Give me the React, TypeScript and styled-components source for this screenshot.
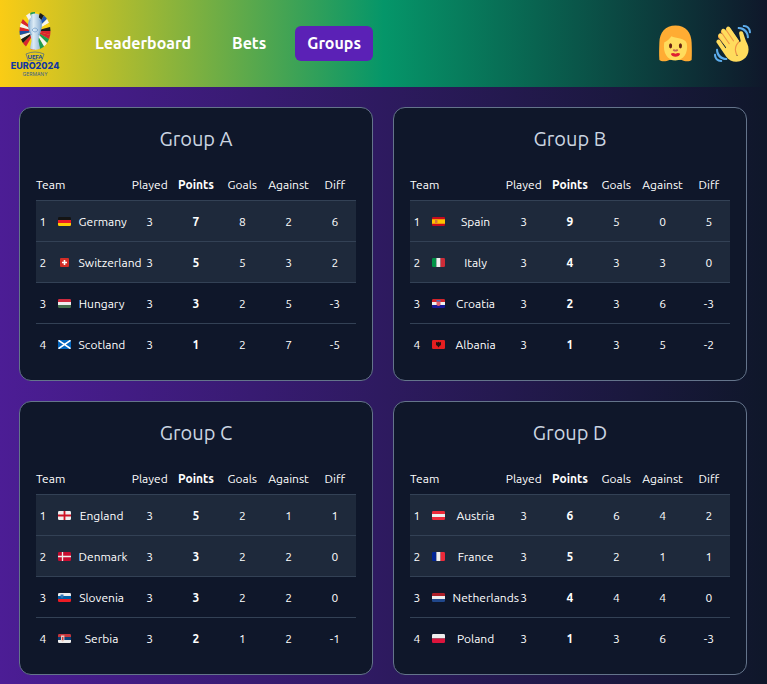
import React from 'react';
import styled, { createGlobalStyle } from 'styled-components';

const GlobalStyle = createGlobalStyle`
  *, *::before, *::after { box-sizing: border-box; }
  body {
    margin: 0;
    min-height: 100vh;
    background: linear-gradient(to right, #4c1d95, #0f172a);
    color: #ffffff;
    font-family: Ubuntu, "Noto Sans", "Open Sans", sans-serif;
    font-size: 16px;
  }
`;

const Header = styled.header`
  display: flex;
  align-items: center;
  justify-content: space-between;
  gap: 16px;
  padding: 10px 16px 10px 10px;
  background: linear-gradient(to right, #facc15, #059669, #0f172a);
`;

const Start = styled.div`
  display: flex;
  align-items: center;
  gap: 23px;
`;

const HomeLink = styled.a`
  display: block;
  height: 67px;
`;

const Nav = styled.nav`
  display: flex;
  gap: 17px;
`;

const NavLink = styled.a<{ $active?: boolean }>`
  padding: 6px 12px;
  border-radius: 6px;
  background: ${(p) => (p.$active ? '#5b21b6' : 'transparent')};
  color: #ffffff;
  font-weight: 700;
  line-height: 23px;
  text-decoration: none;
`;

const Actions = styled.div`
  display: flex;
  gap: 20px;
`;

const IconButton = styled.button`
  display: block;
  padding: 0;
  border: 0;
  background: none;
  cursor: pointer;
  svg { display: block; }
`;

const Groups = styled.main`
  display: grid;
  grid-template-columns: repeat(auto-fit, minmax(340px, 1fr));
  gap: 20px;
  padding: 20px 20px 20px 19px;
`;

const Card = styled.section`
  padding: 16px;
  border: 1px solid #64748b;
  border-radius: 12px;
  background: #0f172a;
`;

const Title = styled.h2`
  margin: 0;
  padding: 1px 0 15px;
  color: #cbd5e1;
  font-size: 20px;
  font-weight: 400;
  line-height: 28px;
  text-align: center;
`;

const Table = styled.table`
  display: block;
  font-size: 12px;
  line-height: 16px;
  thead, tbody { display: block; }
`;

const Row = styled.tr<{ $qualified?: boolean }>`
  display: grid;
  grid-template-columns: repeat(7, minmax(0, 1fr));
  column-gap: 4px;
  background: ${(p) => (p.$qualified ? '#1e293b' : 'transparent')};
  tbody & { border-top: 1px solid #334155; }
`;

const HeadCell = styled.th<{ $strong?: boolean; $team?: boolean }>`
  grid-column: span ${(p) => (p.$team ? 2 : 1)};
  padding: 9px 0 7px;
  font-weight: ${(p) => (p.$strong ? 700 : 400)};
  text-align: ${(p) => (p.$team ? 'left' : 'center')};
`;

const Cell = styled.td<{ $strong?: boolean }>`
  padding: 13px 0 11px;
  font-weight: ${(p) => (p.$strong ? 700 : 400)};
  text-align: center;
`;

const TeamCell = styled.th`
  grid-column: span 2;
  display: grid;
  grid-template-columns: 14px minmax(0, 1fr) 46px;
  align-items: center;
  padding: 13px 0 11px;
  font-weight: 400;
  text-align: center;
  white-space: nowrap;
  svg { display: block; margin: 0 auto 1px; }
`;

const rayColors = [
  '#f7d117', '#1c1c1c', '#1f57b5', '#f4f4f0', '#f7d117', '#1c1c1c', '#d9252f', '#d9252f',
  '#1d9a52', '#f4f4f0', '#1d9a52', '#f7d117', '#d9252f', '#f7d117', '#d9252f', '#1c1c1c',
  '#f4f4f0', '#1f4fa0', '#d9252f', '#f4f4f0', '#d9252f', '#f7d117', '#f4f4f0', '#1d9a52',
];

function Logo() {
  const step = (Math.PI * 2) / rayColors.length;
  return (
    <svg width="50" height="67" viewBox="0 0 50 67" role="img" aria-label="UEFA Euro 2024 Germany">
      <defs>
        <clipPath id="oval"><ellipse cx="25" cy="21" rx="15.5" ry="19" /></clipPath>
        <linearGradient id="silver" x1="0" x2="1">
          <stop offset="0" stopColor="#8fb4d6" />
          <stop offset="0.4" stopColor="#dcebf5" />
          <stop offset="1" stopColor="#86abd0" />
        </linearGradient>
      </defs>
      <g clipPath="url(#oval)">
        {rayColors.map((color, i) => {
          const a = i * step - Math.PI / 2;
          const b = a + step;
          return (
            <path
              key={i}
              fill={color}
              d={`M25 21L${25 + 30 * Math.cos(a)} ${21 + 30 * Math.sin(a)}L${25 + 30 * Math.cos(b)} ${21 + 30 * Math.sin(b)}Z`}
            />
          );
        })}
      </g>
      <path
        d="M21 4.500Q25 2.500 29 4.500L28.800 7.500C32 9 32.500 14 31.300 19C30 24 28.500 27 28.500 31L30 38.500Q25 41 20 38.500L21.500 31C21.500 27 20 24 18.700 19C17.500 14 18 9 21.200 7.500Z"
        fill="url(#silver)"
      />
      <path d="M20 10Q17 17 21.5 25M30 10Q33 17 28.5 25M22 20Q25 16 28 20Q25 24 22 20" fill="none" stroke="#6b9bca" strokeWidth="0.7" />
      <path d="M16 44Q25 40 34 44L31.5 51Q25 48.500 18.5 51Z" fill="none" stroke="#2a55a0" strokeWidth="0.6" />
      <text x="25" y="48.5" textAnchor="middle" fontFamily="Lato, sans-serif" fontWeight="900" fontSize="6" fill="#17459a">UEFA</text>
      <text x="25" y="59" textAnchor="middle" fontFamily="Inter, sans-serif" fontWeight="800" fontSize="9" fill="#1238a0">EURO2024</text>
      <text x="25" y="66" textAnchor="middle" fontFamily="Inter, sans-serif" fontSize="5" fill="#40618b">GERMANY</text>
    </svg>
  );
}

function WomanIcon() {
  return (
    <svg width="37" height="37" viewBox="0 0 36 36" aria-hidden="true">
      <path fill="#FFAC33" d="M18 .5C8 .5 2.500 7.500 2.300 17C2.100 23 1.900 28 2.300 34C4 35.600 9 35.600 12 34H24C27 35.600 32 35.600 33.700 34C34.100 28 33.900 23 33.700 17C33.500 7.500 28 .5 18 .5Z" />
      <path fill="#FFDC5D" d="M7 17C10 15.500 12.500 13.500 14 11C18 13 27.500 12.500 29 18C30.500 27 26 34.500 18 34.500C10 34.500 5.500 27 7 17Z" />
      <ellipse cx="13.200" cy="20.300" rx="1.500" ry="2.500" fill="#662113" />
      <ellipse cx="22.800" cy="20.300" rx="1.500" ry="2.500" fill="#662113" />
      <path d="M16.300 24.500Q18 25.300 19.700 24.500" fill="none" stroke="#C1694F" strokeWidth="1.800" strokeLinecap="round" />
      <path fill="#DF1F32" d="M13.500 28Q15.500 26.700 18 28Q20.500 26.700 22.500 28C22 31.700 14 31.700 13.500 28Z" />
    </svg>
  );
}

function WaveIcon() {
  return (
    <svg width="37" height="37" viewBox="0 0 36 36" aria-hidden="true">
      <path fill="#EF9645" d="M4.861 9.147c.94-.657 2.357-.531 3.201.166l-.968-1.407c-.779-1.111-.5-2.313.612-3.093 1.112-.777 4.263 1.312 4.263 1.312-.786-1.122-.639-2.544.483-3.331 1.122-.784 2.680-.513 3.465.611l10.292 14.719L25 31l-9.224-5.276L4.343 12.611c-.786-1.122-.604-2.680.518-3.464z" />
      <path fill="#FFDC5D" d="M2.695 17.336s-1.132-1.650.519-2.781c1.649-1.131 2.780.518 2.780.518l5.251 7.658c.181-.302.379-.6.6-.894L4.557 11.210s-1.131-1.649.519-2.780c1.649-1.131 2.780.518 2.780.518l6.855 9.997c.255-.208.516-.417.785-.622L7.549 6.732s-1.131-1.649.519-2.780c1.649-1.131 2.780.518 2.780.518l7.947 11.589c.292-.179.581-.334.871-.498L12.238 4.729s-1.131-1.649.518-2.780c1.649-1.131 2.780.518 2.780.518l7.854 11.453 1.194 1.742c-4.948 3.394-5.419 9.779-2.592 13.902.565.825 1.390.260 1.390.260-3.393-4.949-2.357-10.510 2.592-13.903L24.515 8.620s-.545-1.924 1.378-2.470c1.924-.545 2.470 1.379 2.470 1.379l1.685 5.004c.668 1.984 1.379 3.961 2.320 5.831 2.657 5.280 1.070 11.842-3.940 15.279-5.465 3.747-12.936 2.354-16.684-3.110L2.695 17.336z" />
      <g fill="#5DADEC">
        <path d="M12 32.042C8 32.042 3.958 28 3.958 24c0-.553-.405-1-.958-1s-1.042.447-1.042 1C1.958 30 6 34.042 12 34.042c.553 0 1-.489 1-1.042s-.447-.958-1-.958z" />
        <path d="M7 34c-3 0-5-2-5-5 0-.553-.447-1-1-1s-1 .447-1 1c0 4 3 7 7 7 .553 0 1-.447 1-1s-.447-1-1-1zM24 2c-.552 0-1 .448-1 1s.448 1 1 1c4 0 8 3.589 8 8 0 .552.448 1 1 1s1-.448 1-1c0-5.514-4-10-10-10z" />
        <path d="M29 .042c-.552 0-1 .406-1 .958s.448 1.042 1 1.042c3 0 4.958 2.225 4.958 4.958 0 .552.489 1 1.042 1s.958-.448.958-1C35.958 3.163 33 .042 29 .042z" />
      </g>
    </svg>
  );
}

const bands = (a: string, b: string, c: string) => (
  <>
    <path fill={a} d="M0 0h13v3H0z" />
    <path fill={b} d="M0 3h13v3H0z" />
    <path fill={c} d="M0 6h13v3H0z" />
  </>
);

const pales = (a: string, b: string, c: string) => (
  <>
    <path fill={a} d="M0 0h4.400v9H0z" />
    <path fill={b} d="M4.400 0h4.200v9H4.400z" />
    <path fill={c} d="M8.600 0H13v9H8.600z" />
  </>
);

const flagArt: Record<string, React.ReactNode> = {
  Germany: bands('#141414', '#ed1c24', '#ffcd05'),
  Switzerland: (
    <>
      <rect x="2" width="9" height="9" rx="1" fill="#d32d27" />
      <path d="M6.500 2v5M4 4.500h5" stroke="#fff" strokeWidth="1.600" />
    </>
  ),
  Hungary: bands('#cd2a3e', '#eeeeee', '#436f4d'),
  Scotland: (
    <>
      <path fill="#0065bd" d="M0 0h13v9H0z" />
      <path d="M0 0l13 9M13 0L0 9" stroke="#fff" strokeWidth="1.600" />
    </>
  ),
  Spain: (
    <>
      <path fill="#c60a1d" d="M0 0h13v9H0z" />
      <path fill="#ffc400" d="M0 2.300h13v4.400H0z" />
      <path fill="#d9773b" d="M3 3h2.500v3H3z" />
    </>
  ),
  Italy: pales('#009246', '#eeeeee', '#ce2b37'),
  Croatia: (
    <>
      {bands('#d3232a', '#eeeeee', '#171796')}
      <path fill="#e4606a" d="M4.500 2.500h4v3.200q-2 2.400-4 0z" />
      <path fill="#3f6fc0" d="M4.500 1h4v1.500h-4z" />
    </>
  ),
  Albania: (
    <>
      <path fill="#e41e20" d="M0 0h13v9H0z" />
      <path fill="#201010" d="M4 2l1.500.6 1-.8 1 .8L9 2v3L7.500 6 6.500 7.500 5.500 6 4 5z" />
    </>
  ),
  England: (
    <>
      <path fill="#eeeeee" d="M0 0h13v9H0z" />
      <path d="M6.500 0v9M0 4.500h13" stroke="#ce1124" strokeWidth="1.800" />
    </>
  ),
  Denmark: (
    <>
      <path fill="#c60c30" d="M0 0h13v9H0z" />
      <path d="M4.500 0v9M0 4.500h13" stroke="#eee" strokeWidth="1.300" />
    </>
  ),
  Slovenia: (
    <>
      {bands('#eeeeee', '#005da4', '#ed1c24')}
      <path fill="#3575b5" d="M2.500 1.500h3v2.500L4 5.200 2.500 4z" />
    </>
  ),
  Serbia: (
    <>
      {bands('#c6363c', '#0c4076', '#eeeeee')}
      <path fill="#e9c7bd" d="M3 1.500h3.400v4.500L4.700 8 3 6z" />
      <path fill="#c6363c" d="M4 3h1.400v3H4z" />
    </>
  ),
  Austria: bands('#ed2939', '#eeeeee', '#ed2939'),
  France: pales('#002495', '#eeeeee', '#ed2939'),
  Netherlands: bands('#ae1f28', '#eeeeee', '#20478b'),
  Poland: (
    <>
      <path fill="#eeeeee" d="M0 0h13v4.500H0z" />
      <path fill="#dc143c" d="M0 4.500h13V9H0z" />
    </>
  ),
};

function Flag({ team }: { team: string }) {
  const clip = `flag-${team}`;
  return (
    <svg width="13" height="9" viewBox="0 0 13 9" aria-hidden="true">
      <clipPath id={clip}><rect width="13" height="9" rx="1.200" /></clipPath>
      <g clipPath={`url(#${clip})`}>{flagArt[team]}</g>
    </svg>
  );
}

type Standing = [team: string, played: number, points: number, goals: number, against: number, diff: number];

const groups: { name: string; standings: Standing[] }[] = [
  {
    name: 'Group A',
    standings: [
      ['Germany', 3, 7, 8, 2, 6],
      ['Switzerland', 3, 5, 5, 3, 2],
      ['Hungary', 3, 3, 2, 5, -3],
      ['Scotland', 3, 1, 2, 7, -5],
    ],
  },
  {
    name: 'Group B',
    standings: [
      ['Spain', 3, 9, 5, 0, 5],
      ['Italy', 3, 4, 3, 3, 0],
      ['Croatia', 3, 2, 3, 6, -3],
      ['Albania', 3, 1, 3, 5, -2],
    ],
  },
  {
    name: 'Group C',
    standings: [
      ['England', 3, 5, 2, 1, 1],
      ['Denmark', 3, 3, 2, 2, 0],
      ['Slovenia', 3, 3, 2, 2, 0],
      ['Serbia', 3, 2, 1, 2, -1],
    ],
  },
  {
    name: 'Group D',
    standings: [
      ['Austria', 3, 6, 6, 4, 2],
      ['France', 3, 5, 2, 1, 1],
      ['Netherlands', 3, 4, 4, 4, 0],
      ['Poland', 3, 1, 3, 6, -3],
    ],
  },
];

function GroupCard({ name, standings }: { name: string; standings: Standing[] }) {
  return (
    <Card>
      <Title>{name}</Title>
      <Table aria-label={name}>
        <thead>
          <Row>
            <HeadCell scope="col" $team>Team</HeadCell>
            <HeadCell scope="col">Played</HeadCell>
            <HeadCell scope="col" $strong>Points</HeadCell>
            <HeadCell scope="col">Goals</HeadCell>
            <HeadCell scope="col">Against</HeadCell>
            <HeadCell scope="col">Diff</HeadCell>
          </Row>
        </thead>
        <tbody>
          {standings.map(([team, played, points, goals, against, diff], i) => (
            <Row key={team} $qualified={i < 2}>
              <TeamCell scope="row">
                <span>{i + 1}</span>
                <Flag team={team} />
                <span>{team}</span>
              </TeamCell>
              <Cell>{played}</Cell>
              <Cell $strong>{points}</Cell>
              <Cell>{goals}</Cell>
              <Cell>{against}</Cell>
              <Cell>{diff}</Cell>
            </Row>
          ))}
        </tbody>
      </Table>
    </Card>
  );
}

export default function App() {
  return (
    <>
      <GlobalStyle />
      <Header>
        <Start>
          <HomeLink href="#home"><Logo /></HomeLink>
          <Nav aria-label="Main">
            <NavLink href="#leaderboard">Leaderboard</NavLink>
            <NavLink href="#bets">Bets</NavLink>
            <NavLink href="#groups" $active aria-current="page">Groups</NavLink>
          </Nav>
        </Start>
        <Actions>
          <IconButton type="button" aria-label="Profile"><WomanIcon /></IconButton>
          <IconButton type="button" aria-label="Log out"><WaveIcon /></IconButton>
        </Actions>
      </Header>
      <Groups>
        {groups.map((group) => (
          <GroupCard key={group.name} {...group} />
        ))}
      </Groups>
    </>
  );
}
